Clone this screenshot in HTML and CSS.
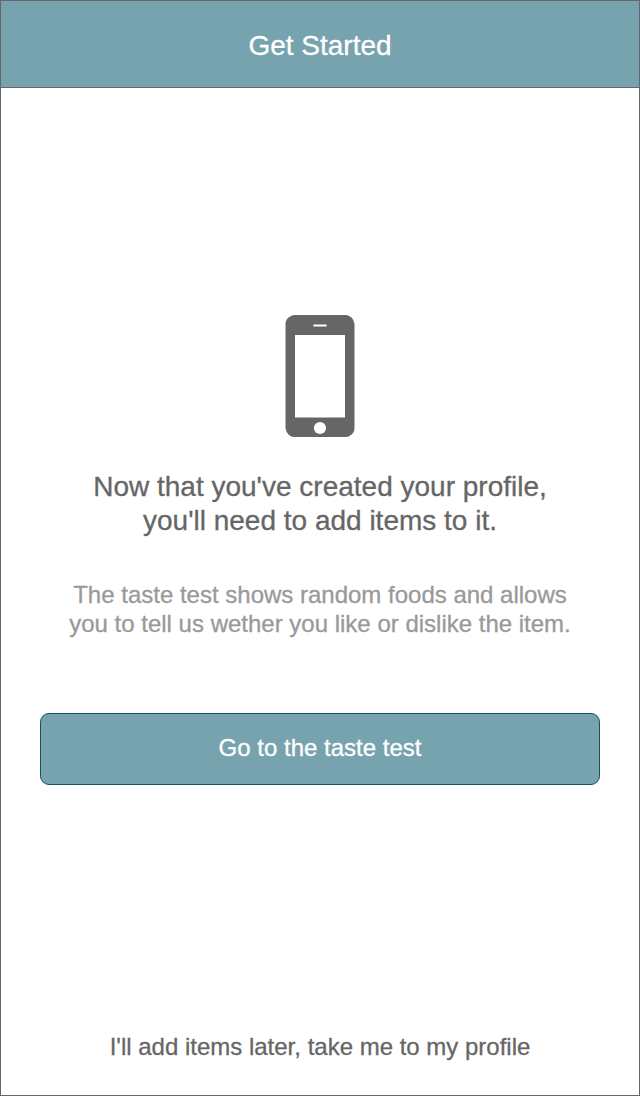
FILE: index.html
```html
<!DOCTYPE html>
<html lang="en">
<head>
<meta charset="utf-8">
<title>Get Started</title>
<link rel="stylesheet" href="styles.css">
</head>
<body>
<div class="screen">
  <header class="header"><h1 class="title">Get Started</h1></header>
  <main class="content">
    <svg class="phone" width="70" height="122" viewBox="0 0 70 122" aria-hidden="true">
      <path fill="#666" fill-rule="evenodd" d="M9 0H61Q64 0 66.500 2.500T69.500 9V113Q69.500 117 66.500 119.500T61 122H9Q6 122 3.500 119.500T.5 113V9Q.5 5 3.500 2.500T9 0ZM10 20V102.500H60V20Z"/>
      <rect x="28.200" y="9.400" width="13.600" height="2.200" rx="1.100" fill="#fff"/>
      <circle cx="35" cy="113" r="6.100" fill="#fff"/>
    </svg>
    <h2 class="lead">Now that you've created your profile,<br>you'll need to add items to it.</h2>
    <p class="note">The taste test shows random foods and allows<br>you to tell us wether you like or dislike the item.</p>
    <a class="button" href="#">Go to the taste test</a>
  </main>
  <footer class="footer"><a class="skip" href="#">I'll add items later, take me to my profile</a></footer>
</div>
</body>
</html>
```
FILE: styles.css
```css
* { box-sizing: border-box; }
body { margin: 0; background: #fff; font-family: "Liberation Sans", Arial, Helvetica, sans-serif; }
.screen { display: flex; flex-direction: column; width: 640px; height: 1096px; border: 1px solid #666; color: #666; text-align: center; }
.header { height: 87px; padding-top: 28px; background: #77a3af; border-bottom: 1px solid #666; }
.title, .lead { margin: 0; font-size: 28px; line-height: 34px; font-weight: 400; }
.title { color: #fff; -webkit-text-stroke: .3px; }
.content { flex: 1; display: flex; flex-direction: column; align-items: center; padding: 227px 39px 0; }
.phone { display: block; flex: none; }
.lead { margin-top: 33px; white-space: nowrap; -webkit-text-stroke: .3px; }
.note { margin: 42px 0 0; font-size: 24px; line-height: 29px; color: #999; white-space: nowrap; -webkit-text-stroke: .3px; }
.button { width: 100%; height: 72px; margin-top: 75px; padding-top: 19px; border: 1px solid #165260; border-radius: 9px; background: #77a3af; color: #fff; font-size: 24px; line-height: 29px; text-decoration: none; -webkit-text-stroke: .3px; }
.footer { padding-bottom: 34px; font-size: 24px; line-height: 29px; }
.skip { display: block; color: #666; text-decoration: none; -webkit-text-stroke: .3px; }
```
